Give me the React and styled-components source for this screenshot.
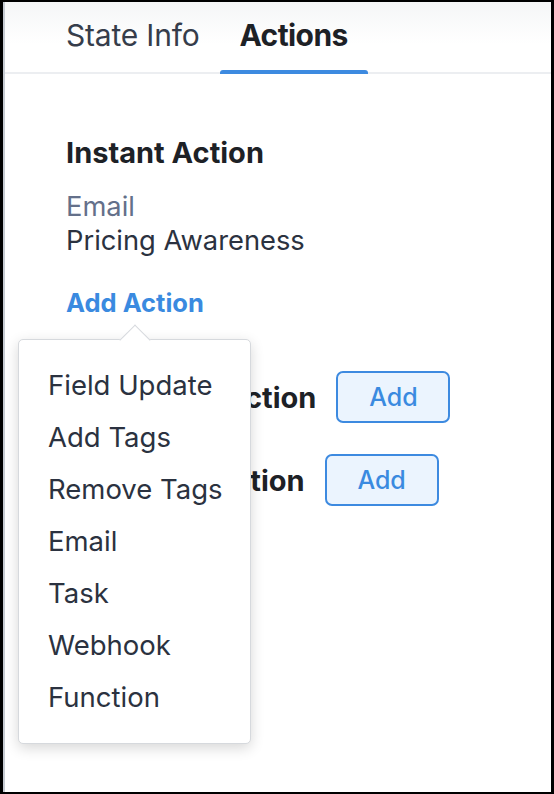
import styled, { createGlobalStyle } from 'styled-components';

const GlobalStyle = createGlobalStyle`
  html, body {
    margin: 0;
    padding: 0;
    background: #000;
  }
  * {
    box-sizing: border-box;
  }
`;

const Frame = styled.div`
  width: 554px;
  height: 794px;
  background: #000;
  padding: 2px 3px 2px 3px;
  font-family: "Inter", "Liberation Sans", sans-serif;
`;

const Panel = styled.div`
  position: relative;
  height: 100%;
  background: #fff;
  border-left: 2px solid #c6cbd2;
  overflow: hidden;
`;

const TabBar = styled.div`
  display: flex;
  height: 72px;
  padding-left: 41px;
  border-bottom: 2px solid #eceef1;
  background: linear-gradient(#f5f6f7, #ffffff 60%);
`;

const Tab = styled.div`
  position: relative;
  display: flex;
  align-items: center;
  padding: 0 20px 4px;
  font-size: 30px;
  font-weight: ${(p) => (p.$active ? 700 : 400)};
  color: ${(p) => (p.$active ? '#1d2126' : '#363d4b')};
  letter-spacing: ${(p) => (p.$active ? '-0.6px' : '-0.2px')};

  &::after {
    content: '';
    display: ${(p) => (p.$active ? 'block' : 'none')};
    position: absolute;
    left: 0;
    right: 0;
    bottom: -2px;
    height: 4px;
    border-radius: 3px 3px 0 0;
    background: #3d8ae0;
  }
`;

const Content = styled.div`
  padding: 60px 0 0 61px;
  display: flex;
  flex-direction: column;
`;

const SectionTitle = styled.div`
  font-size: 29px;
  font-weight: 700;
  color: #1d2126;
  line-height: 38px;
`;

const Label = styled.div`
  font-size: 27.3px;
  line-height: 34px;
  color: ${(p) => (p.$muted ? '#64708a' : '#2b3240')};
`;

const Details = styled.div`
  margin-top: 18px;
  display: flex;
  flex-direction: column;
`;

const LinkButton = styled.div`
  margin-top: 28px;
  font-size: 25.5px;
  line-height: 34px;
  font-weight: 700;
  color: #3a8ae0;
`;

const ActionRows = styled.div`
  margin-top: 51px;
  display: flex;
  flex-direction: column;
  gap: 31px;
`;

const ActionRow = styled.div`
  display: flex;
  align-items: center;
  gap: 20px;
`;

const RowTitle = styled.div`
  font-size: 29px;
  font-weight: 700;
  color: #1d2126;
`;

const AddButton = styled.button`
  width: 114px;
  height: 52px;
  border: 2px solid #3d8ae0;
  border-radius: 7px;
  background: #ebf4fe;
  color: #3a8ae0;
  font-family: inherit;
  font-size: 25px;
  font-weight: 500;
  cursor: pointer;
`;

const Menu = styled.div`
  position: absolute;
  left: 13px;
  top: 337px;
  width: 233px;
  height: 405px;
  padding: 19px 0 0 29px;
  background: #fff;
  border: 1px solid #d6d9dd;
  border-radius: 5px;
  box-shadow: 0 4px 14px rgba(0, 0, 0, 0.16);

  &::before {
    content: '';
    position: absolute;
    left: 105px;
    top: -11px;
    width: 21px;
    height: 21px;
    background: #fff;
    border-left: 1px solid #d6d9dd;
    border-top: 1px solid #d6d9dd;
    transform: rotate(45deg);
  }
`;

const MenuItem = styled.div`
  position: relative;
  font-size: 27.5px;
  line-height: 52px;
  color: #2b3240;
`;

const menuItems = ['Field Update', 'Add Tags', 'Remove Tags', 'Email', 'Task', 'Webhook', 'Function'];

export default function App() {
  return (
    <>
      <GlobalStyle />
      <Frame>
        <Panel>
          <TabBar>
            <Tab>State Info</Tab>
            <Tab $active>Actions</Tab>
          </TabBar>

          <Content>
            <SectionTitle>Instant Action</SectionTitle>
            <Details>
              <Label $muted>Email</Label>
              <Label>Pricing Awareness</Label>
            </Details>
            <LinkButton>Add Action</LinkButton>

            <ActionRows>
              <ActionRow>
                <RowTitle>Scheduled Action</RowTitle>
                <AddButton>Add</AddButton>
              </ActionRow>
              <ActionRow>
                <RowTitle>Recurring Action</RowTitle>
                <AddButton>Add</AddButton>
              </ActionRow>
            </ActionRows>
          </Content>

          <Menu>
            {menuItems.map((item) => (
              <MenuItem key={item}>{item}</MenuItem>
            ))}
          </Menu>
        </Panel>
      </Frame>
    </>
  );
}
